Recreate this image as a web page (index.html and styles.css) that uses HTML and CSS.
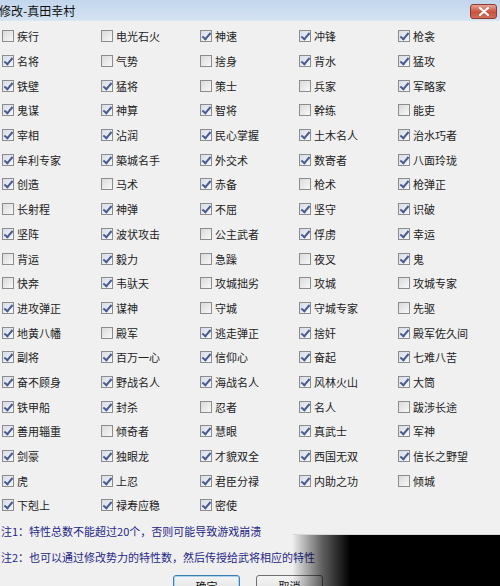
FILE: index.html
```html
<!DOCTYPE html>
<html lang="zh-CN">
<head>
  <meta charset="UTF-8">
  <title>修改-真田幸村</title>
  <link rel="stylesheet" href="styles.css">
</head>
<body>
  <div class="win">
    <div class="titlebar">
      <span class="title">修改-真田幸村</span>
      <button class="close" title="关闭">
        <svg width="12" height="9" viewBox="0 0 12 9"><path d="M2 1 L10 8 M10 1 L2 8" stroke="#fff" stroke-width="2.2" stroke-linecap="round"/></svg>
      </button>
    </div>

    <!-- 特性列表 -->
    <div class="traits">
      <label class="trait"><span class="box"></span>疾行</label>
      <label class="trait"><span class="box"></span>电光石火</label>
      <label class="trait"><span class="box on"></span>神速</label>
      <label class="trait"><span class="box on"></span>冲锋</label>
      <label class="trait"><span class="box on"></span>枪衾</label>

      <label class="trait"><span class="box on"></span>名将</label>
      <label class="trait"><span class="box"></span>气势</label>
      <label class="trait"><span class="box"></span>捨身</label>
      <label class="trait"><span class="box on"></span>背水</label>
      <label class="trait"><span class="box on"></span>猛攻</label>

      <label class="trait"><span class="box on"></span>铁壁</label>
      <label class="trait"><span class="box on"></span>猛将</label>
      <label class="trait"><span class="box"></span>策士</label>
      <label class="trait"><span class="box"></span>兵家</label>
      <label class="trait"><span class="box on"></span>军略家</label>

      <label class="trait"><span class="box on"></span>鬼谋</label>
      <label class="trait"><span class="box on"></span>神算</label>
      <label class="trait"><span class="box on"></span>智将</label>
      <label class="trait"><span class="box"></span>幹练</label>
      <label class="trait"><span class="box"></span>能吏</label>

      <label class="trait"><span class="box on"></span>宰相</label>
      <label class="trait"><span class="box on"></span>沾润</label>
      <label class="trait"><span class="box on"></span>民心掌握</label>
      <label class="trait"><span class="box on"></span>土木名人</label>
      <label class="trait"><span class="box on"></span>治水巧者</label>

      <label class="trait"><span class="box on"></span>牟利专家</label>
      <label class="trait"><span class="box on"></span>築城名手</label>
      <label class="trait"><span class="box on"></span>外交术</label>
      <label class="trait"><span class="box on"></span>数寄者</label>
      <label class="trait"><span class="box on"></span>八面玲珑</label>

      <label class="trait"><span class="box on"></span>创造</label>
      <label class="trait"><span class="box"></span>马术</label>
      <label class="trait"><span class="box on"></span>赤备</label>
      <label class="trait"><span class="box"></span>枪术</label>
      <label class="trait"><span class="box on"></span>枪弹正</label>

      <label class="trait"><span class="box"></span>长射程</label>
      <label class="trait"><span class="box on"></span>神弹</label>
      <label class="trait"><span class="box on"></span>不屈</label>
      <label class="trait"><span class="box on"></span>坚守</label>
      <label class="trait"><span class="box on"></span>识破</label>

      <label class="trait"><span class="box on"></span>坚阵</label>
      <label class="trait"><span class="box on"></span>波状攻击</label>
      <label class="trait"><span class="box"></span>公主武者</label>
      <label class="trait"><span class="box on"></span>俘虏</label>
      <label class="trait"><span class="box on"></span>幸运</label>

      <label class="trait"><span class="box"></span>背运</label>
      <label class="trait"><span class="box on"></span>毅力</label>
      <label class="trait"><span class="box"></span>急躁</label>
      <label class="trait"><span class="box"></span>夜叉</label>
      <label class="trait"><span class="box on"></span>鬼</label>

      <label class="trait"><span class="box"></span>快奔</label>
      <label class="trait"><span class="box on"></span>韦驮天</label>
      <label class="trait"><span class="box"></span>攻城拙劣</label>
      <label class="trait"><span class="box"></span>攻城</label>
      <label class="trait"><span class="box"></span>攻城专家</label>

      <label class="trait"><span class="box on"></span>进攻弹正</label>
      <label class="trait"><span class="box on"></span>谋神</label>
      <label class="trait"><span class="box"></span>守城</label>
      <label class="trait"><span class="box on"></span>守城专家</label>
      <label class="trait"><span class="box"></span>先驱</label>

      <label class="trait"><span class="box on"></span>地黄八幡</label>
      <label class="trait"><span class="box"></span>殿军</label>
      <label class="trait"><span class="box on"></span>逃走弹正</label>
      <label class="trait"><span class="box on"></span>捨奸</label>
      <label class="trait"><span class="box on"></span>殿军佐久间</label>

      <label class="trait"><span class="box on"></span>副将</label>
      <label class="trait"><span class="box on"></span>百万一心</label>
      <label class="trait"><span class="box on"></span>信仰心</label>
      <label class="trait"><span class="box on"></span>奋起</label>
      <label class="trait"><span class="box on"></span>七难八苦</label>

      <label class="trait"><span class="box on"></span>奋不顾身</label>
      <label class="trait"><span class="box on"></span>野战名人</label>
      <label class="trait"><span class="box on"></span>海战名人</label>
      <label class="trait"><span class="box on"></span>风林火山</label>
      <label class="trait"><span class="box on"></span>大筒</label>

      <label class="trait"><span class="box on"></span>铁甲船</label>
      <label class="trait"><span class="box on"></span>封杀</label>
      <label class="trait"><span class="box"></span>忍者</label>
      <label class="trait"><span class="box on"></span>名人</label>
      <label class="trait"><span class="box"></span>跋涉长途</label>

      <label class="trait"><span class="box on"></span>善用辎重</label>
      <label class="trait"><span class="box"></span>倾奇者</label>
      <label class="trait"><span class="box on"></span>慧眼</label>
      <label class="trait"><span class="box on"></span>真武士</label>
      <label class="trait"><span class="box on"></span>军神</label>

      <label class="trait"><span class="box on"></span>剑豪</label>
      <label class="trait"><span class="box on"></span>独眼龙</label>
      <label class="trait"><span class="box on"></span>才貌双全</label>
      <label class="trait"><span class="box on"></span>西国无双</label>
      <label class="trait"><span class="box on"></span>信长之野望</label>

      <label class="trait"><span class="box on"></span>虎</label>
      <label class="trait"><span class="box on"></span>上忍</label>
      <label class="trait"><span class="box on"></span>君臣分禄</label>
      <label class="trait"><span class="box on"></span>内助之功</label>
      <label class="trait"><span class="box"></span>倾城</label>

      <label class="trait"><span class="box on"></span>下剋上</label>
      <label class="trait"><span class="box on"></span>禄寿应稳</label>
      <label class="trait"><span class="box on"></span>密使</label>
    </div>

    <div class="notes">
      <p class="note">注1：特性总数不能超过20个，否则可能导致游戏崩溃</p>
      <p class="note">注2：也可以通过修改势力的特性数，然后传授给武将相应的特性</p>
    </div>

    <div class="buttons">
      <button class="btn default">确定</button>
      <button class="btn">取消</button>
    </div>

    <!-- dark area over the bottom right corner of the capture -->
    <div class="shade"></div>
  </div>
</body>
</html>
```

FILE: styles.css
```css
html, body {
  margin: 0;
  padding: 0;
}
body {
  width: 500px;
  height: 586px;
  overflow: hidden;
  background: #f0f0f0;
  font-family: "Noto Sans CJK SC", "Liberation Sans", sans-serif;
  font-size: 11px;
  color: #222;
}
.win {
  position: relative;
  height: 586px;
  overflow: hidden;
}
.titlebar {
  height: 20px;
  display: flex;
  align-items: center;
  justify-content: space-between;
  background: linear-gradient(#c2d6ec, #d4e3f3);
  border-bottom: 1px solid #dbe6f1;
}
.title {
  font-size: 12px;
  color: #111;
  margin-left: -1px;
}
.close {
  width: 27px;
  height: 15px;
  margin: 2px 3px 0 0;
  padding: 0;
  display: flex;
  align-items: center;
  justify-content: center;
  border: 1px solid #8a3a30;
  border-radius: 3px;
  background: linear-gradient(#e8a494, #c9503c 55%, #d4705c);
}
/* checkbox grid */
.traits {
  display: grid;
  grid-template-columns: repeat(5, 99px);
  grid-auto-rows: 24.7px;
  padding: 3px 0 0 2px;
}
.trait {
  display: flex;
  align-items: center;
  gap: 3px;
  white-space: nowrap;
}
.box {
  position: relative;
  width: 10px;
  height: 10px;
  flex: none;
  border: 1px solid #8c8c8c;
  background: linear-gradient(135deg, #dadada, #f8f8f8);
}
.box.on {
  background: linear-gradient(135deg, #d6dce8, #f6f8fc);
}
.box.on::after {
  content: "";
  position: absolute;
  left: 3px;
  top: 0;
  width: 3px;
  height: 7px;
  border-right: 2px solid #4a5b8f;
  border-bottom: 2px solid #4a5b8f;
  transform: rotate(40deg);
}
.notes {
  padding-left: 1px;
}
.note {
  margin: 0;
  height: 26px;
  line-height: 26px;
  color: #1f2688;
  font-size: 11px;
}
.buttons {
  display: flex;
  gap: 16px;
  padding: 5px 0 0 173px;
}
.btn {
  width: 67px;
  height: 23px;
  font-family: inherit;
  font-size: 11px;
  color: #111;
  border: 1px solid #707070;
  border-radius: 3px;
  background: linear-gradient(#f4f4f4, #dedede);
}
.btn.default {
  border-color: #3c7fb1;
  box-shadow: inset 0 0 0 1px #a8d4f0;
}
.shade {
  position: absolute;
  left: 292px;
  top: 534px;
  right: 0;
  bottom: 0;
  background: linear-gradient(to right, rgba(0,0,0,0), rgba(0,0,0,0.6) 30px, #000 58px);
  border-top: 1px solid #d8d8d8;
  pointer-events: none;
}
```
